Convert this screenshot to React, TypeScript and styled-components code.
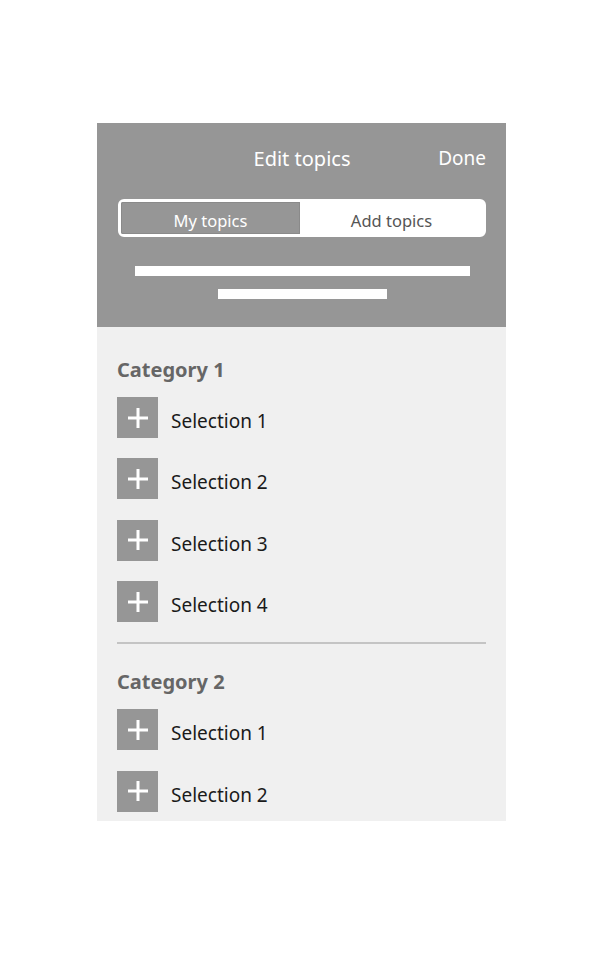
import React from 'react';
import styled, { createGlobalStyle } from 'styled-components';

const GlobalStyle = createGlobalStyle`
  body {
    margin: 0;
    background: #fff;
    font-family: "Noto Sans", "Open Sans", sans-serif;
  }
`;

const Page = styled.div`
  width: 608px;
  height: 960px;
  padding: 123px 0 0 97px;
  box-sizing: border-box;
`;

const Panel = styled.div`
  width: 409px;
  height: 698px;
  display: flex;
  flex-direction: column;
  overflow: hidden;
  background: #f0f0f0;
`;

const Header = styled.div`
  height: 204px;
  flex-shrink: 0;
  background: #969696;
  box-sizing: border-box;
  padding: 20px 20px 0 21px;
  display: flex;
  flex-direction: column;
`;

const TitleRow = styled.div`
  display: grid;
  grid-template-columns: 1fr auto 1fr;
  align-items: center;
  height: 30px;
  color: #fff;
`;

const Title = styled.div`
  grid-column: 2;
  font-size: 20px;
`;

const Done = styled.div`
  grid-column: 3;
  justify-self: end;
  font-size: 19px;
`;

const Segmented = styled.div`
  margin-top: 26px;
  height: 38px;
  box-sizing: border-box;
  border: 3px solid #fff;
  border-radius: 6px;
  background: #fff;
  display: flex;
`;

const Segment = styled.div<{ $active?: boolean }>`
  flex: ${(p) => (p.$active ? '0 0 179px' : '1')};
  display: flex;
  align-items: center;
  justify-content: center;
  padding-top: 5px;
  box-sizing: border-box;
  font-size: 16.5px;
  background: ${(p) => (p.$active ? '#969696' : '#fff')};
  color: ${(p) => (p.$active ? '#fff' : '#555')};
  border-radius: 2px 0 0 2px;
  box-shadow: ${(p) => (p.$active ? 'inset 0 0 0 1px #8a8a8a' : 'none')};
`;

const Lines = styled.div`
  margin-top: 29px;
  display: flex;
  flex-direction: column;
  align-items: center;
  gap: 13px;
`;

const Line = styled.div<{ $w: number }>`
  width: ${(p) => p.$w}px;
  height: 10px;
  background: #fff;
`;

const Body = styled.div`
  padding: 29px 20px 0 20px;
  display: flex;
  flex-direction: column;
`;

const Section = styled.div`
  display: flex;
  flex-direction: column;
`;

const CategoryTitle = styled.div`
  font-size: 20px;
  font-weight: 700;
  color: #666;
  line-height: 28px;
  margin-bottom: 13px;
`;

const List = styled.div`
  display: flex;
  flex-direction: column;
  gap: 20.4px;
`;

const Row = styled.div`
  display: flex;
  align-items: center;
  gap: 13px;
  height: 41px;
`;

const AddBox = styled.div`
  width: 41px;
  height: 41px;
  background: #969696;
  display: flex;
  align-items: center;
  justify-content: center;
  flex-shrink: 0;
`;

const Label = styled.div`
  font-size: 19px;
  color: #1a1a1a;
  padding-top: 7px;
`;

const Divider = styled.div`
  height: 2px;
  background: #c4c4c4;
  margin: 20px 0 24px;
`;

const Plus = () => (
  <svg width="22" height="22" viewBox="0 0 22 22">
    <path d="M11 1v20M1 11h20" stroke="#fff" strokeWidth="3" />
  </svg>
);

const categories = [
  { name: 'Category 1', items: ['Selection 1', 'Selection 2', 'Selection 3', 'Selection 4'] },
  { name: 'Category 2', items: ['Selection 1', 'Selection 2'] },
];

export default function App() {
  return (
    <>
      <GlobalStyle />
      <Page>
        <Panel>
          <Header>
            <TitleRow>
              <Title>Edit topics</Title>
              <Done>Done</Done>
            </TitleRow>
            <Segmented>
              <Segment $active>My topics</Segment>
              <Segment>Add topics</Segment>
            </Segmented>
            <Lines>
              <Line $w={335} />
              <Line $w={169} />
            </Lines>
          </Header>
          <Body>
            {categories.map((cat, i) => (
              <Section key={cat.name}>
                {i > 0 && <Divider />}
                <CategoryTitle>{cat.name}</CategoryTitle>
                <List>
                  {cat.items.map((item) => (
                    <Row key={item}>
                      <AddBox>
                        <Plus />
                      </AddBox>
                      <Label>{item}</Label>
                    </Row>
                  ))}
                </List>
              </Section>
            ))}
          </Body>
        </Panel>
      </Page>
    </>
  );
}
